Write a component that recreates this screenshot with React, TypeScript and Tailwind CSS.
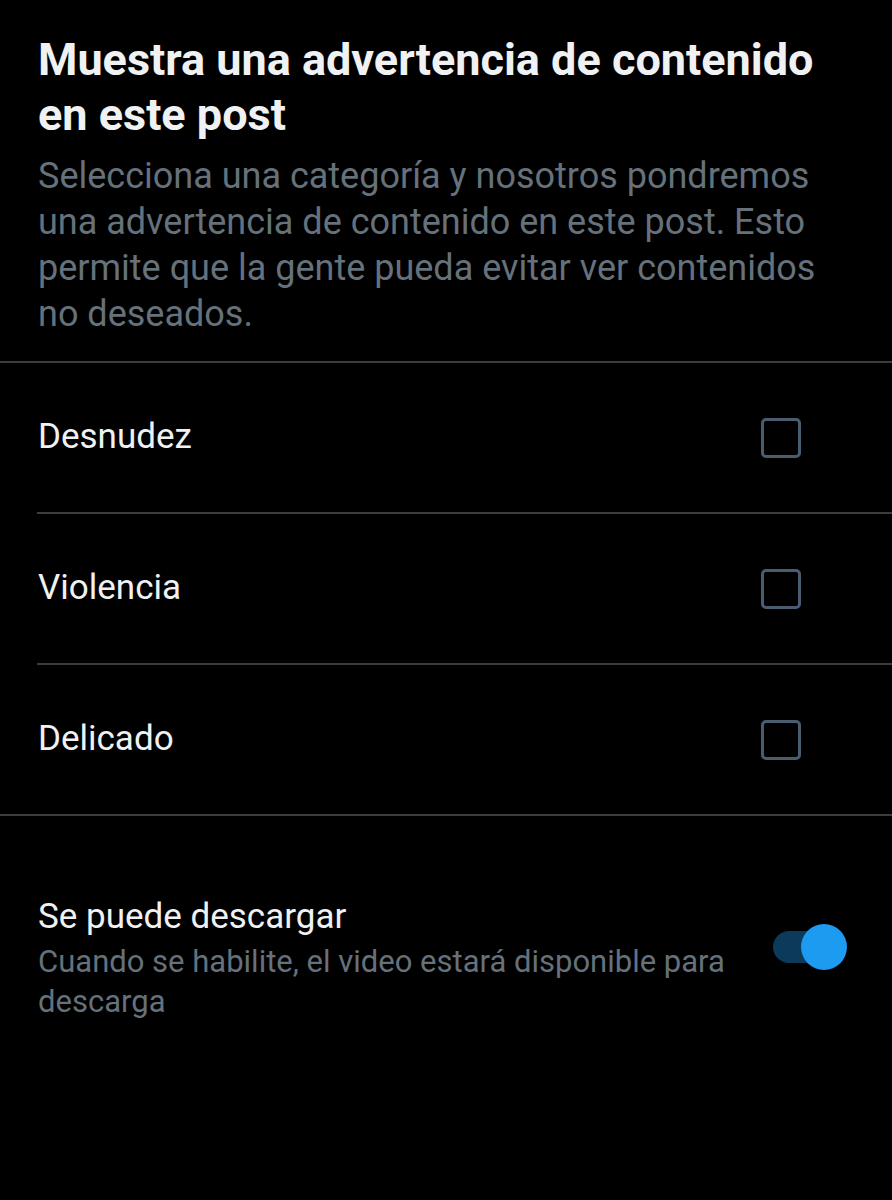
import React from 'react';

const categories = ['Desnudez', 'Violencia', 'Delicado'];

const App: React.FC = () => {
  return (
    <div className="min-h-[1200px] w-full bg-black text-white" style={{ fontFamily: 'Roboto, "Noto Sans", sans-serif' }}>
      <div className="px-[38px] pt-[32px] pb-[24px]">
        <h1 className="text-[45px] font-bold leading-[55px] text-[#eff1f2]">
          Muestra una advertencia de contenido en este post
        </h1>
        <p className="mt-[11px] text-[36px] leading-[46px] text-[#65717b]">
          Selecciona una categoría y nosotros pondremos una advertencia de contenido en este post. Esto permite que la gente pueda evitar ver contenidos no deseados.
        </p>
      </div>

      <div className="h-[2px] bg-[#3a3d40]" />

      <div>
        {categories.map((c, i) => (
          <div key={c}>
            <div className="flex h-[149px] items-center justify-between pl-[38px] pr-[91px]">
              <span className="text-[35px] text-[#eff1f2]">{c}</span>
              <span className="h-[40px] w-[40px] rounded-[5px] border-[3px] border-[#4a5d6e]" />
            </div>
            {i < categories.length - 1 ? (
              <div className="ml-[37px] h-[2px] bg-[#3a3d40]" />
            ) : (
              <div className="h-[2px] bg-[#3a3d40]" />
            )}
          </div>
        ))}
      </div>

      <div className="flex items-start justify-between pl-[38px] pr-[45px] pt-[76px]">
        <div className="max-w-[710px]">
          <div className="text-[35px] leading-[50px] text-[#eff1f2]">Se puede descargar</div>
          <div className="text-[31px] leading-[40px] text-[#65717b]">
            Cuando se habilite, el video estará disponible para descarga
          </div>
        </div>
        <div className="relative mt-[32px] h-[46px] w-[74px]">
          <div className="absolute left-0 top-[7px] h-[32px] w-[56px] rounded-full bg-[#0c3a5a]" />
          <div className="absolute right-0 top-0 h-[46px] w-[46px] rounded-full bg-[#1d9bf0]" />
        </div>
      </div>
    </div>
  );
};

export default App;
